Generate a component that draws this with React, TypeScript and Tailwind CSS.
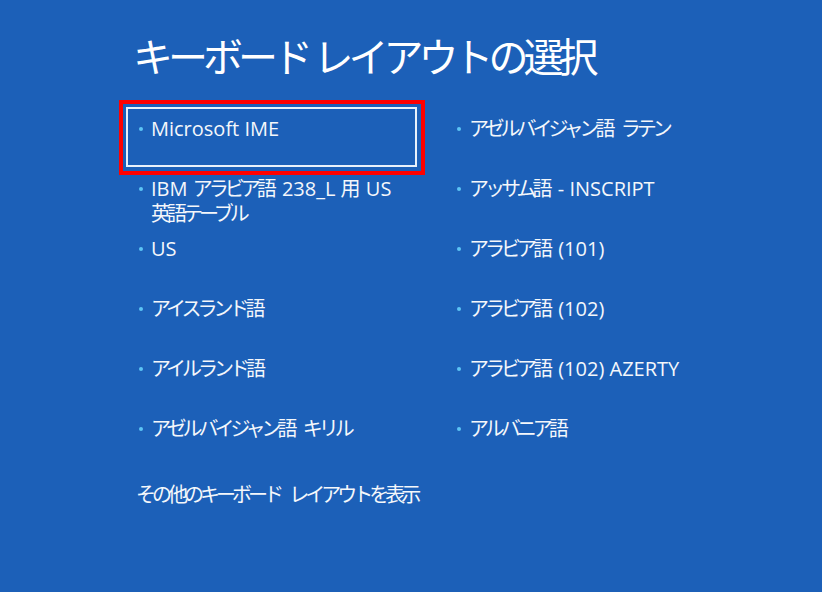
import React from "react";

const CJK_RUN = /([\u3000-\u30ff\u3400-\u9fff\uff00-\uffef]+)/;

// Japanese runs are drawn a bit tighter, like Meiryo UI on the recovery screen
function Jp({ text }: { text: string }) {
  const parts = text.split(CJK_RUN);
  return (
    <>
      {parts.map((p, i) =>
        CJK_RUN.test(p) ? (
          <span key={i} className="pr-[4px] tracking-[-4px]">
            {p}
          </span>
        ) : (
          <span key={i}>{p}</span>
        )
      )}
    </>
  );
}

const left = [
  "Microsoft IME",
  "IBM アラビア語 238_L 用 US\n英語テーブル",
  "US",
  "アイスランド語",
  "アイルランド語",
  "アゼルバイジャン語 キリル",
];

const right = [
  "アゼルバイジャン語 ラテン",
  "アッサム語 - INSCRIPT",
  "アラビア語 (101)",
  "アラビア語 (102)",
  "アラビア語 (102) AZERTY",
  "アルバニア語",
];

function Item({ label, selected }: { label: string; selected?: boolean }) {
  return (
    <div
      className={`relative h-[60px] border-2 pl-[11px] pt-[7px] ${
        selected ? "border-[#e8f1fb]" : "border-transparent"
      }`}
    >
      {selected && (
        <div className="pointer-events-none absolute -left-[9px] -right-[10px] -top-[9px] -bottom-[10px] border-4 border-[#ff0000]" />
      )}
      <div className="flex items-start">
        <span className="mt-[11px] h-[4px] w-[4px] shrink-0 rounded-full bg-[#5cc4f5]" />
        <span className="ml-[8px] w-[260px] whitespace-pre-line text-[20px] leading-[25px] text-[#f4f7fb]">
          <Jp text={label} />
        </span>
      </div>
    </div>
  );
}

export default function App() {
  return (
    <div
      className="h-[592px] w-[822px] overflow-hidden bg-[#1c60b8] pl-[126px] pt-[33px]"
      style={{ fontFamily: '"Open Sans", "Noto Sans CJK JP", sans-serif' }}
    >
      <h1 className="ml-[7px] text-[40px] leading-[48px] font-normal tracking-[-5px] text-white">
        キーボード レイアウトの選択
      </h1>

      <div className="mt-[26px] grid grid-cols-[291px_291px] gap-x-[27px]">
        <div className="flex flex-col">
          {left.map((l, i) => (
            <Item key={l} label={l} selected={i === 0} />
          ))}
        </div>
        <div className="flex flex-col">
          {right.map((l) => (
            <Item key={l} label={l} />
          ))}
        </div>
      </div>

      <div className="ml-[10px] mt-[16px] text-[20px] leading-[24px] text-[#f4f7fb]">
        <Jp text="その他のキーボード レイアウトを表示" />
      </div>
    </div>
  );
}
